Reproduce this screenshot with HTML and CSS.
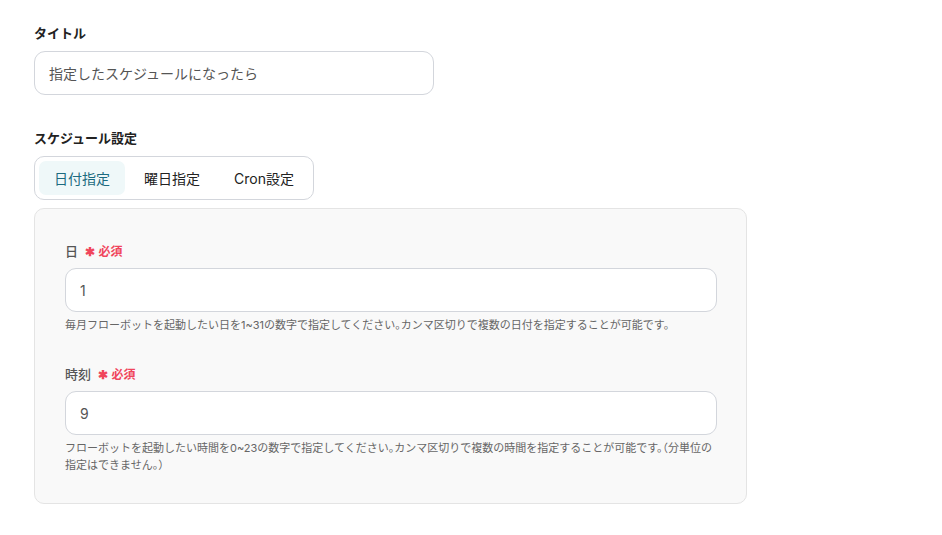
FILE: index.html
```html
<!DOCTYPE html>
<html lang="ja">
<head>
    <meta charset="UTF-8">
    <title>スケジュール設定</title>
    <link rel="stylesheet" href="styles.css">
</head>
<body>
    <div class="form">
        <div class="field">
            <div class="label">タイトル</div>
            <div class="input title-input">指定したスケジュールになったら</div>
        </div>

        <div class="field">
            <div class="label">スケジュール設定</div>
            <div class="tabs">
                <div class="tab active">日付指定</div>
                <div class="tab">曜日指定</div>
                <div class="tab">Cron設定</div>
            </div>
            <div class="panel">
                <div class="sub-field">
                    <div class="sub-label">日 <span class="required"><span class="star">✱</span>必須</span></div>
                    <div class="input">1</div>
                    <div class="help">毎月フローボットを起動したい日を1~31の数字で指定してください。カンマ区切りで複数の日付を指定することが可能です。</div>
                </div>
                <div class="sub-field">
                    <div class="sub-label">時刻 <span class="required"><span class="star">✱</span>必須</span></div>
                    <div class="input">9</div>
                    <div class="help">フローボットを起動したい時間を0~23の数字で指定してください。カンマ区切りで複数の時間を指定することが可能です。（分単位の指定はできません。）</div>
                </div>
            </div>
        </div>
    </div>
</body>
</html>
```

FILE: styles.css
```css
body {
    margin: 0;
    padding: 24px 34px;
    background: #fff;
    font-family: "Inter", "Noto Sans CJK JP", sans-serif;
    color: #222;
}

.form {
    width: 713px;
}

.field {
    margin-bottom: 34px;
}

.field:last-child {
    margin-bottom: 0;
}

.label {
    font-size: 13px;
    font-weight: bold;
    line-height: 18px;
    margin-bottom: 9px;
    color: #222;
}

.input {
    box-sizing: border-box;
    height: 44px;
    border: 1px solid #d3d6dc;
    border-radius: 11px;
    background: #fff;
    padding: 0 14px;
    display: flex;
    align-items: center;
    font-size: 14px;
    color: #555;
}

.title-input {
    width: 400px;
}

.tabs {
    display: inline-flex;
    gap: 4px;
    padding: 4px;
    border: 1px solid #d3d6dc;
    border-radius: 10px;
}

.tab {
    height: 34px;
    padding: 0 15px;
    display: flex;
    align-items: center;
    font-size: 14px;
    color: #222;
    border-radius: 7px;
}

.tab.active {
    background: #eff8f9;
    color: #1c6b80;
}

.panel {
    margin-top: 8px;
    background: #f9f9f9;
    border: 1px solid #e4e4e4;
    border-radius: 10px;
    padding: 33px 29px 29px 30px;
}

.sub-field + .sub-field {
    margin-top: 31px;
}

.sub-label {
    font-size: 13px;
    font-weight: 500;
    color: #555;
    line-height: 18px;
    margin-bottom: 7px;
}

.required {
    margin-left: 4px;
    font-size: 12px;
    font-weight: bold;
    color: #f0455c;
}

.star {
    font-size: 12px;
    margin-right: 3px;
}

.help {
    margin-top: 5px;
    font-size: 11px;
    line-height: 17px;
    color: #666;
    font-feature-settings: "halt";
}
```
